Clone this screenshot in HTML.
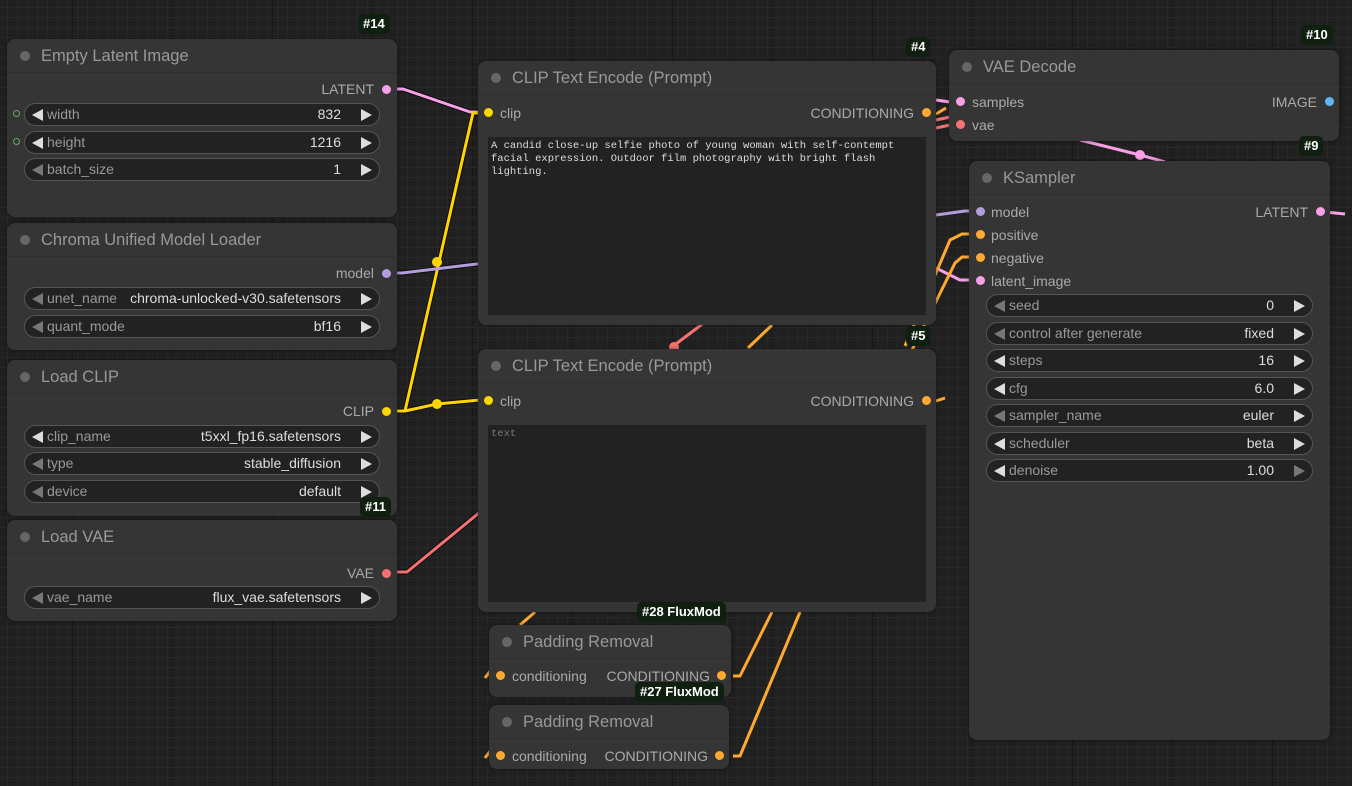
<!DOCTYPE html>
<html><head><meta charset="utf-8">
<style>
*{box-sizing:border-box;margin:0;padding:0}
body{width:1352px;height:786px;overflow:hidden;position:relative;font-family:"Liberation Sans",sans-serif;
background-color:#202020;
background-image:linear-gradient(#282828 1px,transparent 1px),linear-gradient(90deg,#282828 1px,transparent 1px),linear-gradient(#181818 1px,transparent 1px),linear-gradient(90deg,#181818 1px,transparent 1px);
background-size:10px 10px,10px 10px,100px 100px,100px 100px;background-position:-3px -3px,-3px -3px,-28px -13px,-28px -13px}
svg.links{position:absolute;left:0;top:0}
.n{position:absolute;background:#353535;border-radius:8px;box-shadow:0 0 4px rgba(0,0,0,.5)}
.t{position:absolute;left:0;right:0;top:0;height:34px;border-bottom:1px solid #2e2e2e;color:#999;font-size:16.5px;line-height:34px;padding-left:34px}
.t:before{content:"";position:absolute;left:13px;top:12px;width:10px;height:10px;border-radius:50%;background:#666}
.s{position:absolute;font-size:14px;color:#aaa;white-space:nowrap;line-height:16px}
.d{position:absolute;width:9px;height:9px;border-radius:50%}
.w{position:absolute;height:23px;border:1px solid #555;border-radius:12px;background:#222;font-size:14px;color:#999;line-height:21px}
.w .l{position:absolute;left:22px}
.w .v{position:absolute;right:38px;color:#ddd}
.w .a{position:absolute;left:7px;top:5px;width:0;height:0;border-top:6px solid transparent;border-bottom:6px solid transparent;border-right:11px solid #ddd}
.w .b{position:absolute;right:7px;top:5px;width:0;height:0;border-top:6px solid transparent;border-bottom:6px solid transparent;border-left:11px solid #ddd}
.w .dim{border-right-color:#777}
.w .dimr{border-left-color:#777}
.bd{position:absolute;color:#fff;font-weight:bold;font-size:13px;line-height:20px;padding:0 5px;border-radius:5px;background:#0f1f10}
.ta{position:absolute;background:#222;font-family:"Liberation Mono",monospace;font-size:10.5px;line-height:13px;color:#ddd;padding:3px 3px}
</style></head><body>
<svg class="links" width="1352" height="786">
<g fill="none" stroke-width="5" stroke="#000" stroke-opacity=".6" stroke-linejoin="round">
<polyline points="386,89 403,89 470,112 480,112"/>
<polyline points="386,411 405,411 473,113 488,113"/>
<polyline points="405,411 437,404 480,400"/>
<polyline points="386,273 402,273 485,263"/>
<polyline points="386,572 407,572 485,508"/>
</g>
<g fill="none" stroke-width="3" stroke-linejoin="round">
<polyline stroke="#f9a0e8" points="386,89 403,89 470,112 480,112"/>
<polyline stroke="#ffd500" points="386,411 405,411 473,113 488,113"/>
<polyline stroke="#ffd500" points="405,411 437,404 480,400"/>
<polyline stroke="#b39ddb" points="386,273 402,273 485,263"/>
<polyline stroke="#f87171" points="386,572 407,572 485,508"/>
<polyline stroke="#f87171" points="672,347 705,322"/>
<polyline stroke="#f87171" points="936,128 950,125"/>
<polyline stroke="#f87171" points="936,120 950,117"/>
<polyline stroke="#b39ddb" points="936,215 965,211 980,211"/>
<polyline stroke="#f9a0e8" points="936,268 960,280 980,280"/>
<polyline stroke="#f9a0e8" points="936,100 950,102"/>
<polyline stroke="#f9a0e8" points="1080,140 1140,155 1165,162"/>
<polyline stroke="#f9a0e8" points="1325,212 1345,214"/>
<polyline stroke="#ffa931" points="748,348 772,325"/>
<polyline stroke="#ffa931" points="905,346 950,240 962,234 975,234"/>
<polyline stroke="#ffa931" points="912,350 955,263 962,257 975,257"/>
<polyline stroke="#ffa931" points="733,676 740,676 772,612"/>
<polyline stroke="#ffa931" points="733,756 740,756 800,612"/>
<polyline stroke="#ffa931" points="520,625 535,612"/>
<polyline stroke="#ffa931" points="485,678 491,670"/>
<polyline stroke="#ffa931" points="485,758 491,750"/>
<polyline stroke="#ffa931" points="936,401 945,398"/>
<polyline stroke="#ffa931" points="936,114 946,108"/>
</g>
<circle cx="437" cy="262" r="5" fill="#ffd500"/>
<circle cx="437" cy="404" r="5" fill="#ffd500"/>
<circle cx="674" cy="347" r="5" fill="#f87171"/>
<circle cx="1140" cy="155" r="5" fill="#f9a0e8"/>
</svg>

<div class="bd" style="left:358px;top:14px">#14</div>
<div class="n" style="left:7px;top:39px;width:390px;height:178px">
<div class="t">Empty Latent Image</div>
<div class="s" style="right:23px;top:42px">LATENT</div><div class="d" style="right:6px;top:46px;background:#f9a0e8"></div>
<div class="d" style="left:6px;top:71px;border:1px solid #6a6;width:7px;height:7px"></div>
<div class="d" style="left:6px;top:99px;border:1px solid #6a6;width:7px;height:7px"></div>
<div class="w" style="left:17px;top:64px;width:356px"><i class="a"></i><span class="l">width</span><span class="v">832</span><i class="b"></i></div>
<div class="w" style="left:17px;top:92px;width:356px"><i class="a"></i><span class="l">height</span><span class="v">1216</span><i class="b"></i></div>
<div class="w" style="left:17px;top:119px;width:356px"><i class="a dim"></i><span class="l">batch_size</span><span class="v">1</span><i class="b"></i></div>
</div>

<div class="n" style="left:7px;top:223px;width:390px;height:127px">
<div class="t">Chroma Unified Model Loader</div>
<div class="s" style="right:23px;top:42px">model</div><div class="d" style="right:6px;top:46px;background:#b39ddb"></div>
<div class="w" style="left:17px;top:64px;width:356px"><i class="a dim"></i><span class="l">unet_name</span><span class="v">chroma-unlocked-v30.safetensors</span><i class="b"></i></div>
<div class="w" style="left:17px;top:92px;width:356px"><i class="a dim"></i><span class="l">quant_mode</span><span class="v">bf16</span><i class="b"></i></div>
</div>

<div class="n" style="left:7px;top:360px;width:390px;height:156px">
<div class="t">Load CLIP</div>
<div class="s" style="right:23px;top:43px">CLIP</div><div class="d" style="right:6px;top:47px;background:#ffd500"></div>
<div class="w" style="left:17px;top:65px;width:356px"><i class="a"></i><span class="l">clip_name</span><span class="v">t5xxl_fp16.safetensors</span><i class="b"></i></div>
<div class="w" style="left:17px;top:92px;width:356px"><i class="a dim"></i><span class="l">type</span><span class="v">stable_diffusion</span><i class="b"></i></div>
<div class="w" style="left:17px;top:120px;width:356px"><i class="a dim"></i><span class="l">device</span><span class="v">default</span><i class="b"></i></div>
</div>
<div class="bd" style="left:360px;top:497px">#11</div>

<div class="n" style="left:7px;top:520px;width:390px;height:101px">
<div class="t">Load VAE</div>
<div class="s" style="right:23px;top:45px">VAE</div><div class="d" style="right:6px;top:49px;background:#f87171"></div>
<div class="w" style="left:17px;top:66px;width:356px"><i class="a dim"></i><span class="l">vae_name</span><span class="v">flux_vae.safetensors</span><i class="b"></i></div>
</div>

<div class="bd" style="left:906px;top:37px">#4</div>
<div class="n" style="left:478px;top:61px;width:458px;height:264px">
<div class="t">CLIP Text Encode (Prompt)</div>
<div class="d" style="left:6px;top:47px;background:#ffd500"></div><div class="s" style="left:22px;top:44px">clip</div>
<div class="s" style="right:22px;top:44px">CONDITIONING</div><div class="d" style="right:5px;top:47px;background:#ffa931"></div>
<div class="ta" style="left:10px;top:76px;width:438px;height:178px">A candid close-up selfie photo of young woman with self-contempt facial expression. Outdoor film photography with bright flash lighting.</div>
</div>

<div class="bd" style="left:906px;top:326px">#5</div>
<div class="n" style="left:478px;top:349px;width:458px;height:263px">
<div class="t">CLIP Text Encode (Prompt)</div>
<div class="d" style="left:6px;top:47px;background:#ffd500"></div><div class="s" style="left:22px;top:44px">clip</div>
<div class="s" style="right:22px;top:44px">CONDITIONING</div><div class="d" style="right:5px;top:47px;background:#ffa931"></div>
<div class="ta" style="left:10px;top:76px;width:438px;height:177px;color:#777">text</div>
</div>

<div class="n" style="left:489px;top:625px;width:242px;height:72px">
<div class="t">Padding Removal</div>
<div class="d" style="left:7px;top:46px;background:#ffa931"></div><div class="s" style="left:23px;top:43px">conditioning</div>
<div class="s" style="right:21px;top:43px">CONDITIONING</div><div class="d" style="right:5px;top:46px;background:#ffa931"></div>
</div>
<div class="bd" style="left:637px;top:602px">#28 FluxMod</div>

<div class="n" style="left:489px;top:705px;width:240px;height:64px">
<div class="t">Padding Removal</div>
<div class="d" style="left:7px;top:46px;background:#ffa931"></div><div class="s" style="left:23px;top:43px">conditioning</div>
<div class="s" style="right:21px;top:43px">CONDITIONING</div><div class="d" style="right:5px;top:46px;background:#ffa931"></div>
</div>
<div class="bd" style="left:635px;top:682px">#27 FluxMod</div>

<div class="bd" style="left:1301px;top:25px">#10</div>
<div class="n" style="left:949px;top:50px;width:390px;height:91px">
<div class="t">VAE Decode</div>
<div class="d" style="left:7px;top:47px;background:#f9a0e8"></div><div class="s" style="left:23px;top:44px">samples</div>
<div class="d" style="left:7px;top:70px;background:#f87171"></div><div class="s" style="left:23px;top:67px">vae</div>
<div class="s" style="right:22px;top:44px">IMAGE</div><div class="d" style="right:5px;top:47px;background:#64b5f6"></div>
</div>

<div class="bd" style="left:1299px;top:136px">#9</div>
<div class="n" style="left:969px;top:161px;width:361px;height:579px">
<div class="t">KSampler</div>
<div class="d" style="left:7px;top:46px;background:#b39ddb"></div><div class="s" style="left:22px;top:43px">model</div>
<div class="d" style="left:7px;top:69px;background:#ffa931"></div><div class="s" style="left:22px;top:66px">positive</div>
<div class="d" style="left:7px;top:92px;background:#ffa931"></div><div class="s" style="left:22px;top:89px">negative</div>
<div class="d" style="left:7px;top:115px;background:#f9a0e8"></div><div class="s" style="left:22px;top:112px">latent_image</div>
<div class="s" style="right:22px;top:43px">LATENT</div><div class="d" style="right:5px;top:46px;background:#f9a0e8"></div>
<div class="w" style="left:17px;top:133px;width:327px"><i class="a dim"></i><span class="l">seed</span><span class="v">0</span><i class="b"></i></div>
<div class="w" style="left:17px;top:161px;width:327px"><i class="a dim"></i><span class="l">control after generate</span><span class="v">fixed</span><i class="b"></i></div>
<div class="w" style="left:17px;top:188px;width:327px"><i class="a"></i><span class="l">steps</span><span class="v">16</span><i class="b"></i></div>
<div class="w" style="left:17px;top:216px;width:327px"><i class="a"></i><span class="l">cfg</span><span class="v">6.0</span><i class="b"></i></div>
<div class="w" style="left:17px;top:243px;width:327px"><i class="a dim"></i><span class="l">sampler_name</span><span class="v">euler</span><i class="b"></i></div>
<div class="w" style="left:17px;top:271px;width:327px"><i class="a"></i><span class="l">scheduler</span><span class="v">beta</span><i class="b"></i></div>
<div class="w" style="left:17px;top:298px;width:327px"><i class="a"></i><span class="l">denoise</span><span class="v">1.00</span><i class="b dimr"></i></div>
</div>
</body></html>
